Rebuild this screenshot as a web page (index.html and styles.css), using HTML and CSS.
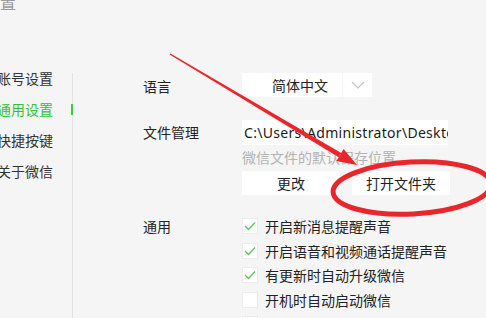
FILE: index.html
```html
<!DOCTYPE html>
<html lang="zh-CN">
<head>
<meta charset="utf-8">
<title>设置</title>
<link rel="stylesheet" href="styles.css">
</head>
<body>
<div class="window">
  <div class="title">设置</div>
  <div class="main">
    <nav class="sidebar">
      <div class="nav-item">账号设置</div>
      <div class="nav-item active">通用设置</div>
      <div class="nav-item">快捷按键</div>
      <div class="nav-item">关于微信</div>
    </nav>
    <div class="divider"></div>
    <div class="content">
      <div class="row row-lang">
        <div class="label">语言</div>
        <div class="select">
          <div class="select-value">简体中文</div>
          <div class="select-arrow">
            <svg width="14" height="8" viewBox="0 0 14 8"><path d="M1 1 L7 7 L13 1" fill="none" stroke="#c4c4c4" stroke-width="1.2"/></svg>
          </div>
        </div>
      </div>
      <div class="row row-file">
        <div class="label">文件管理</div>
        <div class="file-group">
          <div class="path">C:\Users\Administrator\Desktop\WeChat Files</div>
          <div class="hint">微信文件的默认保存位置</div>
          <div class="buttons">
            <div class="btn">更改</div>
            <div class="btn">打开文件夹</div>
          </div>
        </div>
      </div>
      <div class="row row-general">
        <div class="label">通用</div>
        <div class="checks">
          <div class="check"><span class="box on"><svg width="12" height="10" viewBox="0 0 12 10"><path d="M1 5 L4.5 8.5 L11 1.5" fill="none" stroke="#5fc25f" stroke-width="1.3"/></svg></span>开启新消息提醒声音</div>
          <div class="check"><span class="box on"><svg width="12" height="10" viewBox="0 0 12 10"><path d="M1 5 L4.5 8.5 L11 1.5" fill="none" stroke="#5fc25f" stroke-width="1.3"/></svg></span>开启语音和视频通话提醒声音</div>
          <div class="check"><span class="box on"><svg width="12" height="10" viewBox="0 0 12 10"><path d="M1 5 L4.5 8.5 L11 1.5" fill="none" stroke="#5fc25f" stroke-width="1.3"/></svg></span>有更新时自动升级微信</div>
          <div class="check"><span class="box"></span>开机时自动启动微信</div>
          <div class="check"><span class="box"></span>保留聊天记录</div>
        </div>
      </div>
    </div>
  </div>
  <svg class="annotation" width="486" height="318" viewBox="0 0 486 318">
    <polygon points="170.4,53.4 341.3,152.9 338.7,157.2 169.6,54.6" fill="#e8262b"/>
    <polygon points="357,165 336.4,161 343.6,149" fill="#e8262b"/>
    <ellipse cx="412" cy="188" rx="79" ry="26" fill="none" stroke="#e8262b" stroke-width="5" transform="rotate(-3 412 188)"/>
  </svg>
</div>
</body>
</html>
```
FILE: styles.css
```css
html, body {
  margin: 0;
  padding: 0;
}
body {
  background: #f5f5f5;
  font-family: "Noto Sans CJK SC", "Noto Sans", sans-serif;
  color: #222;
  width: 486px;
  height: 318px;
  overflow: hidden;
}
.window {
  position: relative;
  width: 486px;
  height: 318px;
  overflow: hidden;
}
.title {
  font-size: 16px;
  line-height: 16px;
  height: 16px;
  color: #9a9a9a;
  margin-left: -16px;
  margin-top: -6px;
}
.main {
  display: flex;
  margin-top: 54px;
}
.sidebar {
  width: 75px;
  margin-left: -3px;
  margin-top: -1px;
  display: flex;
  flex-direction: column;
}
.nav-item {
  position: relative;
  font-size: 14px;
  height: 31px;
  line-height: 31px;
  color: #333;
  white-space: nowrap;
}
.nav-item.active {
  color: #35c035;
}
.nav-item.active::after {
  content: "";
  position: absolute;
  right: -1px;
  top: 10px;
  width: 2px;
  height: 11px;
  background: #3ccb3c;
  z-index: 2;
}
.divider {
  width: 1px;
  margin-top: 9px;
  height: 260px;
  background: #e3e3e3;
}
.content {
  padding-left: 70px;
  padding-top: 9px;
  display: flex;
  flex-direction: column;
}
.row {
  display: flex;
}
.label {
  width: 99px;
  font-size: 14px;
  color: #222;
  flex-shrink: 0;
}
.row-lang .label {
  line-height: 24px;
  padding-top: 1px;
}
.select {
  display: flex;
  height: 24px;
  gap: 1px;
}
.select-value {
  width: 70px;
  padding-left: 30px;
  background: #fff;
  font-size: 14px;
  line-height: 24px;
  color: #222;
}
.select-arrow {
  width: 29px;
  background: #fff;
  display: flex;
  align-items: center;
  justify-content: center;
}
.row-file {
  margin-top: 22px;
}
.row-file .label {
  line-height: 24px;
  padding-top: 0;
}
.file-group {
  display: flex;
  flex-direction: column;
}
.path {
  width: 204px;
  height: 25px;
  padding-left: 2px;
  background: #fff;
  font-family: "Noto Sans", "Noto Sans CJK SC", sans-serif;
  font-size: 14px;
  letter-spacing: 0.3px;
  line-height: 25px;
  color: #1a1a1a;
  white-space: nowrap;
  overflow: hidden;
}
.hint {
  font-size: 14px;
  color: #b3b3b3;
  height: 26px;
  line-height: 24px;
}
.buttons {
  display: flex;
  gap: 12px;
}
.btn {
  width: 98px;
  height: 24px;
  line-height: 24px;
  background: #fff;
  text-align: center;
  font-size: 14px;
  color: #222;
}
.row-general {
  margin-top: 23px;
}
.row-general .label {
  line-height: 16px;
  padding-top: 0;
}
.checks {
  display: flex;
  flex-direction: column;
  gap: 8.5px;
}
.check {
  display: flex;
  align-items: center;
  gap: 7px;
  height: 16px;
  line-height: 16px;
  font-size: 14px;
  color: #222;
  white-space: nowrap;
}
.box {
  width: 16px;
  height: 16px;
  background: #fff;
  box-shadow: inset 0 0 0 1px #ececec;
  display: flex;
  align-items: center;
  justify-content: center;
  flex-shrink: 0;
}
.annotation {
  position: absolute;
  left: 0;
  top: 0;
  pointer-events: none;
}
```
